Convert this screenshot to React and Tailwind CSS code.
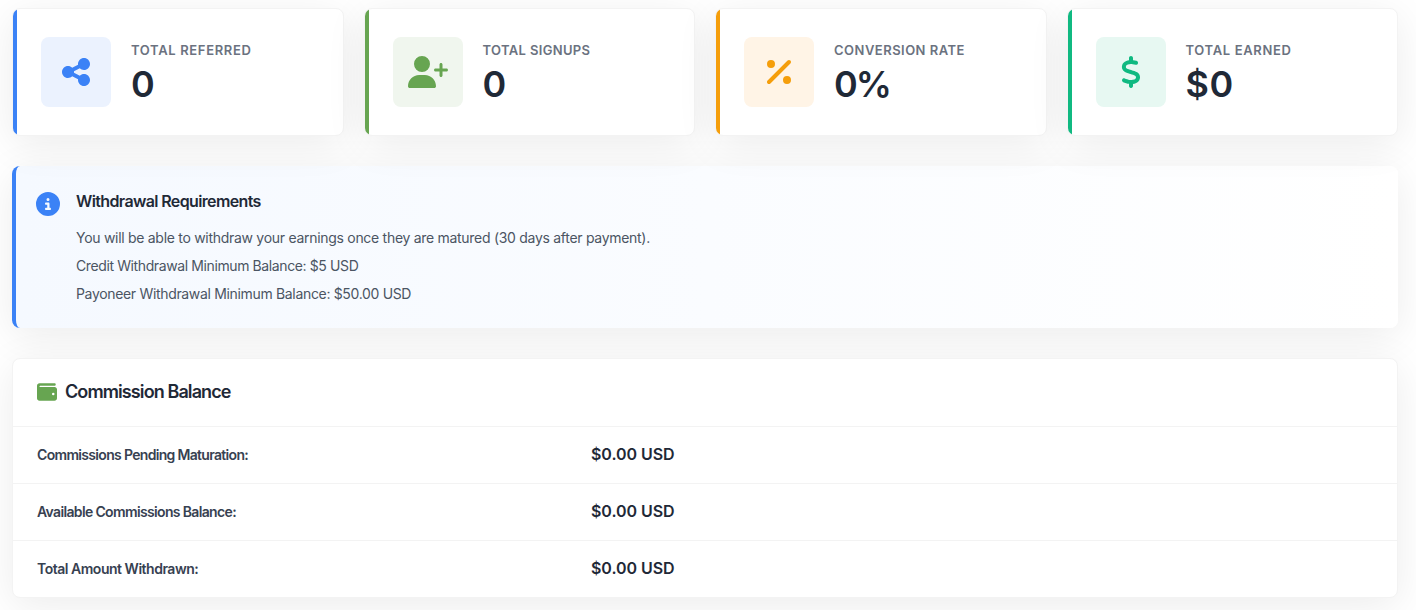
import React from 'react';
import {
  FaShareNodes,
  FaUserPlus,
  FaPercent,
  FaDollarSign,
  FaCircleInfo,
  FaWallet,
} from 'react-icons/fa6';

const stats = [
  {
    label: 'Total Referred',
    value: '0',
    icon: FaShareNodes,
    iconSize: 'h-8 w-7',
    bar: 'bg-[#3b82f6]',
    tile: 'bg-[#ebf2fe] text-[#3b82f6]',
    tracking: 'tracking-[0.65px]',
    valueTracking: 'tracking-normal',
  },
  {
    label: 'Total Signups',
    value: '0',
    icon: FaUserPlus,
    iconSize: 'h-8 w-10',
    bar: 'bg-[#67a551]',
    tile: 'bg-[#f0f6ee] text-[#67a551]',
    tracking: 'tracking-[0.35px]',
    valueTracking: 'tracking-normal',
  },
  {
    label: 'Conversion Rate',
    value: '0%',
    icon: FaPercent,
    iconSize: 'h-8 w-6',
    bar: 'bg-[#f59e0b]',
    tile: 'bg-[#fff4e6] text-[#f59e0b]',
    tracking: 'tracking-[0.48px]',
    valueTracking: 'tracking-[-2px]',
  },
  {
    label: 'Total Earned',
    value: '$0',
    icon: FaDollarSign,
    iconSize: 'h-8 w-5',
    bar: 'bg-[#10b981]',
    tile: 'bg-[#e7f8f2] text-[#10b981]',
    tracking: 'tracking-[0.65px]',
    valueTracking: 'tracking-[0.5px]',
  },
];

const requirements = [
  {
    text: 'You will be able to withdraw your earnings once they are matured (30 days after payment).',
    tracking: 'tracking-[-0.29px]',
  },
  { text: 'Credit Withdrawal Minimum Balance: $5 USD', tracking: 'tracking-[-0.39px]' },
  { text: 'Payoneer Withdrawal Minimum Balance: $50.00 USD', tracking: 'tracking-[-0.33px]' },
];

const balances = [
  { label: 'Commissions Pending Maturation:', value: '$0.00 USD', tracking: 'tracking-[-0.68px]' },
  { label: 'Available Commissions Balance:', value: '$0.00 USD', tracking: 'tracking-[-0.65px]' },
  { label: 'Total Amount Withdrawn:', value: '$0.00 USD', tracking: 'tracking-[-0.48px]' },
];

const StatCard = ({ stat }) => {
  const Icon = stat.icon;

  return (
    <div className="flex h-32 overflow-hidden rounded-lg border border-[#f3f3f3] bg-white shadow-[0_8px_40px_rgba(0,0,0,0.08)]">
      <div className={`w-1 shrink-0 ${stat.bar}`} />
      <div className="flex items-center gap-5 pl-6">
        <div className={`flex size-[70px] shrink-0 items-center justify-center rounded-lg ${stat.tile}`}>
          <Icon className={stat.iconSize} />
        </div>
        <div className="flex flex-col">
          <span className={`text-[13px] leading-5 font-semibold whitespace-nowrap text-[#6b7280] uppercase ${stat.tracking}`}>
            {stat.label}
          </span>
          <span className={`mt-1 text-4xl leading-10 font-semibold text-[#1f2937] ${stat.valueTracking}`}>
            {stat.value}
          </span>
        </div>
      </div>
    </div>
  );
};

const WithdrawalRequirements = () => (
  <div className="mt-[30px] flex h-[162px] items-start gap-4 rounded-lg border-l-4 border-[#3b82f6] bg-linear-to-r from-[#f5f9ff] to-white pt-[26px] pl-5 shadow-[0_8px_40px_rgba(0,0,0,0.08)]">
    <FaCircleInfo className="size-6 shrink-0 text-[#3b82f6]" />
    <div>
      <h4 className="-mt-px text-base leading-5 font-semibold tracking-[-0.63px] text-[#1f2937]">
        Withdrawal Requirements
      </h4>
      <div className="mt-[13px] text-sm leading-7 text-[#4b5563]">
        {requirements.map((line) => (
          <p key={line.text} className={line.tracking}>{line.text}</p>
        ))}
      </div>
    </div>
  </div>
);

const CommissionBalance = () => (
  <div className="mt-[30px] h-60 overflow-hidden rounded-lg border border-[#f3f3f3] bg-white shadow-[0_8px_40px_rgba(0,0,0,0.08)]">
    <div className="flex h-[68px] items-center gap-2 border-b border-[#f3f3f3] px-6 pb-0.5">
      <FaWallet className="mt-px size-5 text-[#67a551]" />
      <h3 className="text-lg font-semibold tracking-[-0.9px] text-[#1f2937]">Commission Balance</h3>
    </div>
    {balances.map((row) => (
      <div key={row.label} className="flex h-[57px] items-center border-b border-[#f3f3f3] px-6 last:h-14 last:border-b-0">
        <span className={`w-[554px] text-sm font-semibold text-[#374151] ${row.tracking}`}>{row.label}</span>
        <span className="pb-0.5 text-base font-semibold tracking-[-0.05px] text-[#1f2937]">{row.value}</span>
      </div>
    ))}
  </div>
);

const App = () => {
  return (
    <div className="h-[610px] overflow-hidden bg-white pt-2 pr-[18px] pl-3 font-[Inter,sans-serif]">
      <div className="grid grid-cols-4 gap-5">
        {stats.map((stat) => (
          <StatCard key={stat.label} stat={stat} />
        ))}
      </div>
      <WithdrawalRequirements />
      <CommissionBalance />
    </div>
  );
};

export default App;
